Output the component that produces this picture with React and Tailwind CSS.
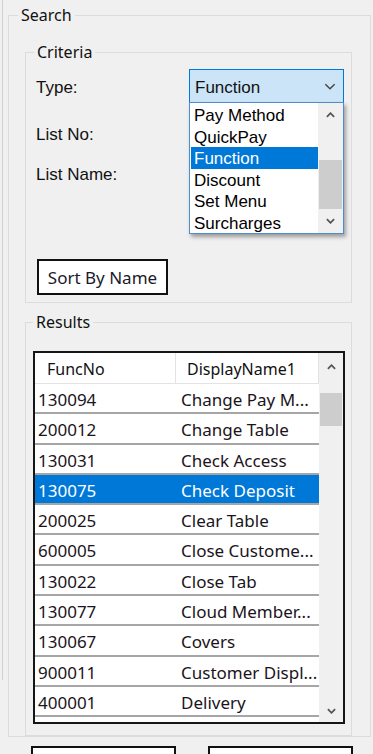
import React from 'react';

const rows = [
  ['130094', 'Change Pay M...'],
  ['200012', 'Change Table'],
  ['130031', 'Check Access'],
  ['130075', 'Check Deposit'],
  ['200025', 'Clear Table'],
  ['600005', 'Close Custome...'],
  ['130022', 'Close Tab'],
  ['130077', 'Cloud Member...'],
  ['130067', 'Covers'],
  ['900011', 'Customer Displ...'],
  ['400001', 'Delivery'],
];

const typeOptions = ['Pay Method', 'QuickPay', 'Function', 'Discount', 'Set Menu', 'Surcharges'];

const ui = { fontFamily: '"Noto Sans", "Open Sans", sans-serif' };
const ms = { fontFamily: '"Liberation Sans", Arial, sans-serif' };

function Chevron({ up, w = 10, h = 6, stroke = 1.6 }) {
  return (
    <svg width={w} height={h} viewBox="0 0 10 6">
      <polyline
        points={up ? '1,5 5,1 9,5' : '1,1 5,5 9,1'}
        fill="none"
        stroke="currentColor"
        strokeWidth={stroke}
      />
    </svg>
  );
}

export default function App() {
  return (
    <div className="w-[373px] h-[754px] overflow-hidden bg-[#f0f0f0] flex text-[#111]" style={ui}>
      {/* window edge */}
      <div className="w-[2px] shrink-0" />
      <div className="w-px h-[680px] bg-[#d0d0d0] shrink-0" />
      <div className="w-[5px] shrink-0" />

      <div className="flex flex-col w-[363px] shrink-0">
        {/* === SEARCH === */}
        <fieldset className="mt-[4px] w-[363px] h-[739px] border border-[#dcdcdc]">
          <legend className="ml-[9px] px-[3px] text-[16px] leading-[22px]">Search</legend>
          <div className="pl-[16px] flex flex-col">
            {/* Criteria */}
            <fieldset className="mt-[15px] w-[327px] h-[262px] border border-[#dcdcdc]">
              <legend className="ml-[8px] px-[3px] text-[16px] leading-[22px]">Criteria</legend>
              <div className="pl-[10px] flex flex-col">
                <div className="mt-[6px] h-[34px] flex items-center">
                  <div className="w-[153px] pt-[4px] text-[17px]" style={ms}>Type:</div>
                  <div className="relative w-[155px] h-[34px]">
                    <div className="w-full h-full border border-[#0078d7] bg-[#cce4f7] flex items-center justify-between pl-[5px] pr-[7px] text-[17px]" style={ms}>
                      <span className="pt-[3px]">Function</span>
                      <span className="text-[#444]"><Chevron w={12} h={7} stroke={1.2} /></span>
                    </div>
                    {/* dropdown popup */}
                    <div className="absolute left-0 top-[33px] z-10 w-[155px] h-[132px] border border-[#4f8cc9] bg-white flex shadow-[2px_3px_4px_rgba(0,0,0,0.35)]">
                      <div className="w-[128px] pl-[1px] pt-[1px] flex flex-col text-[17px]" style={ms}>
                        {typeOptions.map((o) => (
                          <div
                            key={o}
                            className={`h-[21.6px] leading-[23px] pl-[3px] w-[127px] whitespace-nowrap ${o === 'Function' ? 'bg-[#0078d7] text-white' : 'text-black'}`}
                          >
                            {o}
                          </div>
                        ))}
                      </div>
                      <div className="flex-1 bg-[#f0f0f0] flex flex-col">
                        <div className="h-[24px] flex items-center justify-center text-[#555]"><Chevron up w={9} h={6} stroke={2} /></div>
                        <div className="mt-[33px] mx-[1px] h-[49px] bg-[#cdcdcd]" />
                        <div className="mt-auto h-[24px] flex items-center justify-center text-[#555]"><Chevron w={9} h={6} stroke={2} /></div>
                      </div>
                    </div>
                  </div>
                </div>
                <div className="mt-[15px] h-[30px] pt-[4px] flex items-center text-[17px]" style={ms}>List No:</div>
                <div className="mt-[10px] h-[30px] pt-[4px] flex items-center text-[17px]" style={ms}>List Name:</div>
                <button className="mt-[71px] ml-[1px] w-[131px] h-[36px] border-2 border-[#111] bg-white text-[17px] leading-none text-[#1a1a2a]">
                  Sort By Name
                </button>
              </div>
            </fieldset>

            {/* Results */}
            <fieldset className="mt-[8px] w-[327px] h-[425px] border border-[#dcdcdc]">
              <legend className="ml-[7px] px-[3px] text-[16px] leading-[22px]">Results</legend>
              <div className="mt-[18px] ml-[7px] w-[312px] h-[373px] border-2 border-[#161616] bg-white flex overflow-hidden">
                <div className="w-[284px] flex flex-col">
                  <div className="h-[31px] shrink-0 flex border-b border-[#e3e3e3] text-[16px]">
                    <div className="w-[141px] border-r border-[#e3e3e3] pl-[12px] pt-[2px] flex items-center">FuncNo</div>
                    <div className="flex-1 border-r border-[#e3e3e3] pl-[11px] pt-[2px] flex items-center">DisplayName1</div>
                  </div>
                  {rows.map(([no, name]) => {
                    const sel = no === '130075';
                    return (
                      <div key={no} className="shrink-0">
                        <div className={`h-[28.3px] pt-[3px] flex items-center text-[17px] ${sel ? 'bg-[#0078d7] text-white' : 'text-[#1b1420]'}`}>
                          <div className="w-[141px] pl-[3px]">{no}</div>
                          <div className="flex-1 pl-[5px] whitespace-nowrap">{name}</div>
                        </div>
                        <div className="h-[2px] bg-[#a6a6a6]" />
                      </div>
                    );
                  })}
                </div>
                <div className="flex-1 bg-[#f0f0f0] flex flex-col">
                  <div className="h-[28px] flex items-center justify-center text-[#555]"><Chevron up w={9} h={6} stroke={2} /></div>
                  <div className="mt-[12px] mx-[1px] h-[33px] bg-[#cdcdcd]" />
                  <div className="mt-auto h-[22px] flex items-center justify-center text-[#555]"><Chevron w={9} h={6} stroke={2} /></div>
                </div>
              </div>
            </fieldset>
          </div>
        </fieldset>

        {/* bottom buttons (cut off) */}
        <div className="mt-[9px] flex">
          <div className="ml-[23px] w-[145px] h-[30px] border-2 border-[#111] bg-white shrink-0" />
          <div className="ml-[32px] w-[145px] h-[30px] border-2 border-[#111] bg-white shrink-0" />
        </div>
      </div>
    </div>
  );
}
